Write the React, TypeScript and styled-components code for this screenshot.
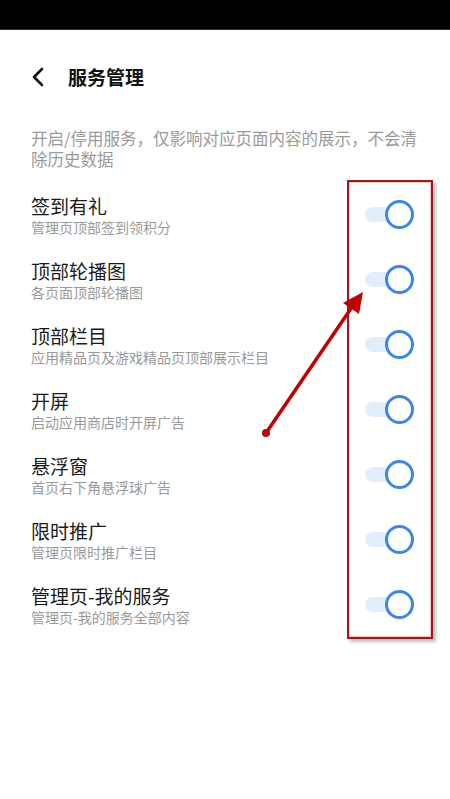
import React from 'react'
import styled, { createGlobalStyle } from 'styled-components'

const GlobalStyle = createGlobalStyle`
  html, body {
    margin: 0;
    padding: 0;
    background: #fff;
  }
  body {
    font-family: "Noto Sans CJK SC", "Noto Sans", sans-serif;
  }
`

const Page = styled.div`
  position: relative;
  width: 450px;
  height: 799px;
  background: #fff;
  overflow: hidden;
`

const StatusBar = styled.div`
  height: 29px;
  background: #000;
  border-bottom: 1px solid #333;
`

const Header = styled.div`
  display: flex;
  align-items: center;
  height: 34px;
  margin-top: 30px;
  padding-left: 31px;
`

const BackButton = styled.div`
  display: flex;
  align-items: center;
  width: 37px;
`

const Title = styled.h1`
  margin: 0;
  font-size: 19px;
  font-weight: 700;
  color: #111;
  line-height: 34px;
`

const Description = styled.p`
  margin: 34px 0 0;
  padding-left: 31px;
  width: 395px;
  font-size: 16.5px;
  line-height: 21px;
  color: #9a9a9a;
`

const List = styled.div`
  margin-top: 12px;
  display: flex;
  flex-direction: column;
`

const Row = styled.div`
  display: flex;
  align-items: center;
  justify-content: space-between;
  height: 65px;
  padding: 0 36px 0 31px;
  box-sizing: border-box;
`

const Texts = styled.div`
  display: flex;
  flex-direction: column;
`

const ItemTitle = styled.div`
  font-size: 19px;
  line-height: 24px;
  color: #1a1a1a;
`

const ItemSub = styled.div`
  font-size: 14px;
  line-height: 18px;
  color: #9a9a9a;
`

const Switch = styled.div`
  position: relative;
  width: 49px;
  height: 29px;
  display: flex;
  align-items: center;
  justify-content: flex-end;
`

const Track = styled.div`
  position: absolute;
  left: 0;
  right: 10px;
  height: 15px;
  border-radius: 8px;
  background: #e2eefc;
`

const Knob = styled.div`
  position: relative;
  width: 23px;
  height: 23px;
  border-radius: 50%;
  border: 3px solid #3b86e8;
  background: #fff;
`

const Highlight = styled.div`
  position: absolute;
  left: 347px;
  top: 180px;
  width: 82px;
  height: 455px;
  border: 2px solid #a3161b;
  box-shadow: inset 0 0 0 1px #f2c9c9, 3px 3px 3px rgba(0, 0, 0, 0.25);
  pointer-events: none;
`

const ArrowLayer = styled.svg`
  position: absolute;
  left: 0;
  top: 0;
  pointer-events: none;
`

const items = [
  { title: '签到有礼', sub: '管理页顶部签到领积分' },
  { title: '顶部轮播图', sub: '各页面顶部轮播图' },
  { title: '顶部栏目', sub: '应用精品页及游戏精品页顶部展示栏目' },
  { title: '开屏', sub: '启动应用商店时开屏广告' },
  { title: '悬浮窗', sub: '首页右下角悬浮球广告' },
  { title: '限时推广', sub: '管理页限时推广栏目' },
  { title: '管理页-我的服务', sub: '管理页-我的服务全部内容' },
]

export default function App() {
  return (
    <Page>
      <GlobalStyle />
      <StatusBar />
      <Header>
        <BackButton>
          <svg width="14" height="20" viewBox="0 0 14 20">
            <path d="M11 2 L3 10 L11 18" fill="none" stroke="#111" strokeWidth="2.6" strokeLinecap="round" strokeLinejoin="round" />
          </svg>
        </BackButton>
        <Title>服务管理</Title>
      </Header>
      <Description>开启/停用服务，仅影响对应页面内容的展示，不会清除历史数据</Description>
      <List>
        {items.map((it) => (
          <Row key={it.title}>
            <Texts>
              <ItemTitle>{it.title}</ItemTitle>
              <ItemSub>{it.sub}</ItemSub>
            </Texts>
            <Switch>
              <Track />
              <Knob />
            </Switch>
          </Row>
        ))}
      </List>
      <Highlight />
      <ArrowLayer width="450" height="799" viewBox="0 0 450 799">
        <circle cx="266" cy="433" r="4" fill="#c00000" />
        <line x1="266" y1="433" x2="352" y2="307" stroke="#c00000" strokeWidth="3.5" strokeLinecap="round" />
        <polygon points="363,292 343,303 359,314" fill="#c00000" />
      </ArrowLayer>
    </Page>
  )
}
